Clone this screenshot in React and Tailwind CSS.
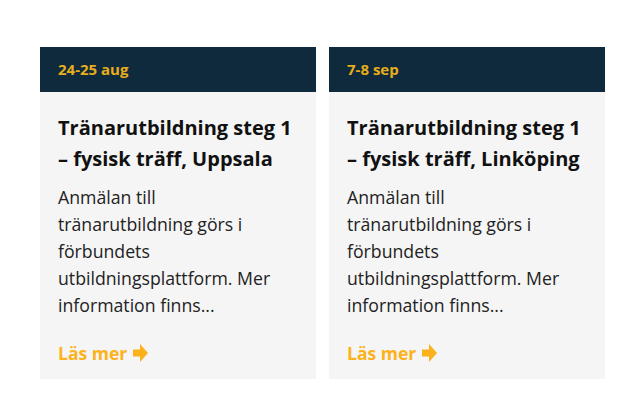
import React from 'react';

const events = [
  {
    date: '24-25 aug',
    title: 'Tränarutbildning steg 1 – fysisk träff, Uppsala',
  },
  {
    date: '7-8 sep',
    title: 'Tränarutbildning steg 1 – fysisk träff, Linköping',
  },
];

const Arrow = () => (
  <svg width="15" height="18" viewBox="0 0 15 18" className="ml-[6px]">
    <path d="M0 5.5h7V0l8 9-8 9v-5.5H0z" fill="#fbb21b" />
  </svg>
);

const EventCard = ({ date, title }) => (
  <div className="w-[276px] bg-[#f5f5f5] flex flex-col">
    <div className="h-[45px] bg-[#0f2a3d] flex items-center px-[18px]">
      <span className="text-[15px] font-bold text-[#e7ad1c]">{date}</span>
    </div>
    <div className="pl-[18px] pr-[26px] pt-[20px] pb-[13px]">
      <h3 className="-mr-[8px] text-[20px] leading-[31px] font-bold text-[#111]">{title}</h3>
      <p className="mt-[10px] text-[17.7px] leading-[27px] text-[#222]">
        Anmälan till tränarutbildning görs i förbundets utbildningsplattform. Mer information finns...
      </p>
      <a className="mt-[21px] flex items-center text-[17.5px] font-bold text-[#fbb21b]">
        Läs mer <Arrow />
      </a>
    </div>
  </div>
);

export default function App() {
  return (
    <div className="w-[637px] h-[417px] bg-white pt-[47px] pl-[40px] flex gap-[13px] items-start" style={{ fontFamily: '"Open Sans", "Noto Sans", sans-serif' }}>
      {events.map((e) => (
        <EventCard key={e.date} {...e} />
      ))}
    </div>
  );
}
